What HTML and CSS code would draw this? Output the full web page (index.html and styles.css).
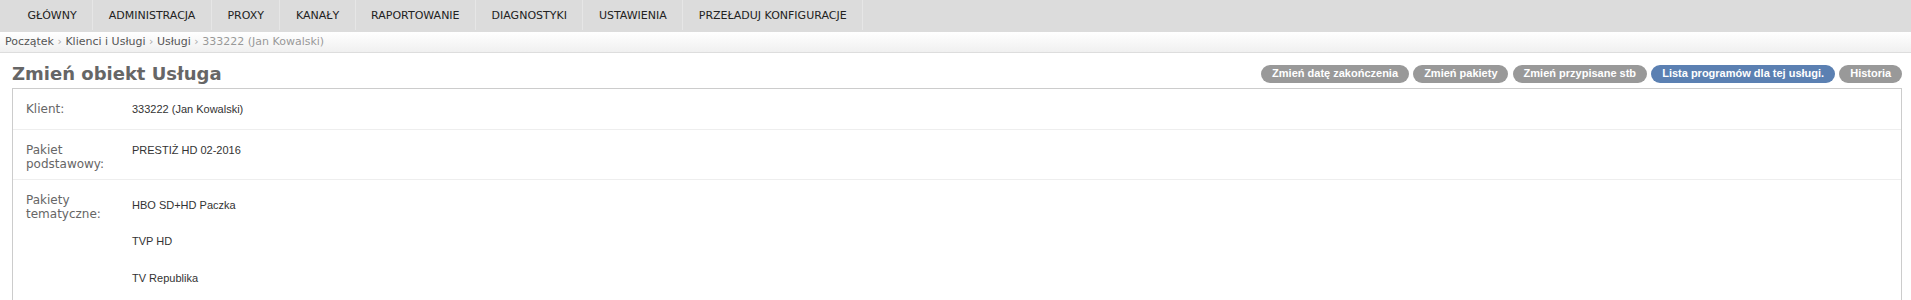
FILE: index.html
```html
<!DOCTYPE html>
<html lang="pl">
<head>
<meta charset="utf-8">
<title>Zmień obiekt Usługa</title>
<link rel="stylesheet" href="styles.css">
</head>
<body>
<nav class="topnav">
  <ul class="topnav-list">
    <li class="topnav-item"><a href="#">GŁÓWNY</a></li>
    <li class="topnav-item"><a href="#">ADMINISTRACJA</a></li>
    <li class="topnav-item"><a href="#">PROXY</a></li>
    <li class="topnav-item"><a href="#">KANAŁY</a></li>
    <li class="topnav-item"><a href="#">RAPORTOWANIE</a></li>
    <li class="topnav-item"><a href="#">DIAGNOSTYKI</a></li>
    <li class="topnav-item"><a href="#">USTAWIENIA</a></li>
    <li class="topnav-item"><a href="#">PRZEŁADUJ KONFIGURACJE</a></li>
  </ul>
</nav>
<div class="breadcrumbs">
  <a href="#">Początek</a> <span class="sep">›</span> <a href="#">Klienci i Usługi</a> <span class="sep">›</span> <a href="#">Usługi</a> <span class="sep">›</span> <span class="current">333222 (Jan Kowalski)</span>
</div>
<main class="content">
  <div class="page-header">
    <h1 class="page-title">Zmień obiekt Usługa</h1>
    <ul class="object-tools">
      <li><a class="tool" href="#">Zmień datę zakończenia</a></li>
      <li><a class="tool" href="#">Zmień pakiety</a></li>
      <li><a class="tool" href="#">Zmień przypisane stb</a></li>
      <li><a class="tool tool-primary" href="#">Lista programów dla tej usługi.</a></li>
      <li><a class="tool" href="#">Historia</a></li>
    </ul>
  </div>
  <fieldset class="module">
    <div class="form-row">
      <label class="field-label">Klient:</label>
      <div class="readonly">333222 (Jan Kowalski)</div>
    </div>
    <div class="form-row">
      <label class="field-label">Pakiet podstawowy:</label>
      <div class="readonly">PRESTIŻ HD 02-2016</div>
    </div>
    <div class="form-row">
      <label class="field-label">Pakiety tematyczne:</label>
      <ul class="readonly-list">
        <li>HBO SD+HD Paczka</li>
        <li>TVP HD</li>
        <li>TV Republika</li>
      </ul>
    </div>
  </fieldset>
</main>
</body>
</html>
```
FILE: styles.css
```css
html, body {
  margin: 0;
  padding: 0;
  background: #fff;
}
body {
  font-family: "DejaVu Sans", Verdana, sans-serif;
  color: #333;
}
a {
  text-decoration: none;
}

.topnav {
  background: #dcdcdc;
  height: 32px;
}
.topnav-list {
  list-style: none;
  margin: 0;
  padding: 0 0 0 12px;
  display: flex;
}
.topnav-item {
  height: 30px;
  border-right: 1px solid #e6e6e6;
}
.topnav-item a {
  display: block;
  padding: 2px 15.5px 0;
  line-height: 28px;
  font-size: 11px;
  color: #222;
}

.breadcrumbs {
  height: 20px;
  line-height: 20px;
  padding: 0 5px;
  font-size: 11px;
  background: linear-gradient(#ffffff, #f0f0f0);
  border-bottom: 1px solid #dddddd;
  color: #999;
}
.breadcrumbs a {
  color: #555;
}
.breadcrumbs .sep {
  color: #aaa;
}
.breadcrumbs .current {
  color: #999;
}

.content {
  padding: 10px 9px 0 12px;
}
.page-header {
  display: flex;
  justify-content: space-between;
  align-items: center;
  margin-bottom: 4px;
}
.page-title {
  margin: 0;
  font-size: 18px;
  font-weight: bold;
  color: #666;
  line-height: 21px;
}
.object-tools {
  list-style: none;
  margin: 0;
  padding: 0;
  display: flex;
  gap: 4.5px;
}
.tool {
  display: block;
  padding: 2.5px 10.8px;
  line-height: 13px;
  font-family: "Liberation Sans", Arial, sans-serif;
  font-size: 11px;
  font-weight: bold;
  color: #fff;
  background: #999;
  border-radius: 15px;
}
.tool-primary {
  background: #5b80b2;
}

.module {
  margin: 0;
  padding: 0;
  border: 1px solid #ccc;
  min-width: 0;
}
.form-row {
  display: flex;
  padding: 8px 13px;
  border-bottom: 1px solid #eee;
}
.field-label {
  flex: 0 0 106px;
  padding-top: 5px;
  font-size: 12px;
  line-height: 14px;
  color: #666;
}
.readonly {
  padding: 6px 0 5px;
  font-family: "Liberation Sans", Arial, sans-serif;
  font-size: 11px;
  line-height: 13px;
  color: #333;
}
.readonly-list {
  list-style: none;
  margin: 0;
  padding: 10.5px 0 0;
  font-family: "Liberation Sans", Arial, sans-serif;
  font-size: 11px;
  line-height: 13px;
  color: #333;
}
.readonly-list li {
  margin-bottom: 23.6px;
}
```
